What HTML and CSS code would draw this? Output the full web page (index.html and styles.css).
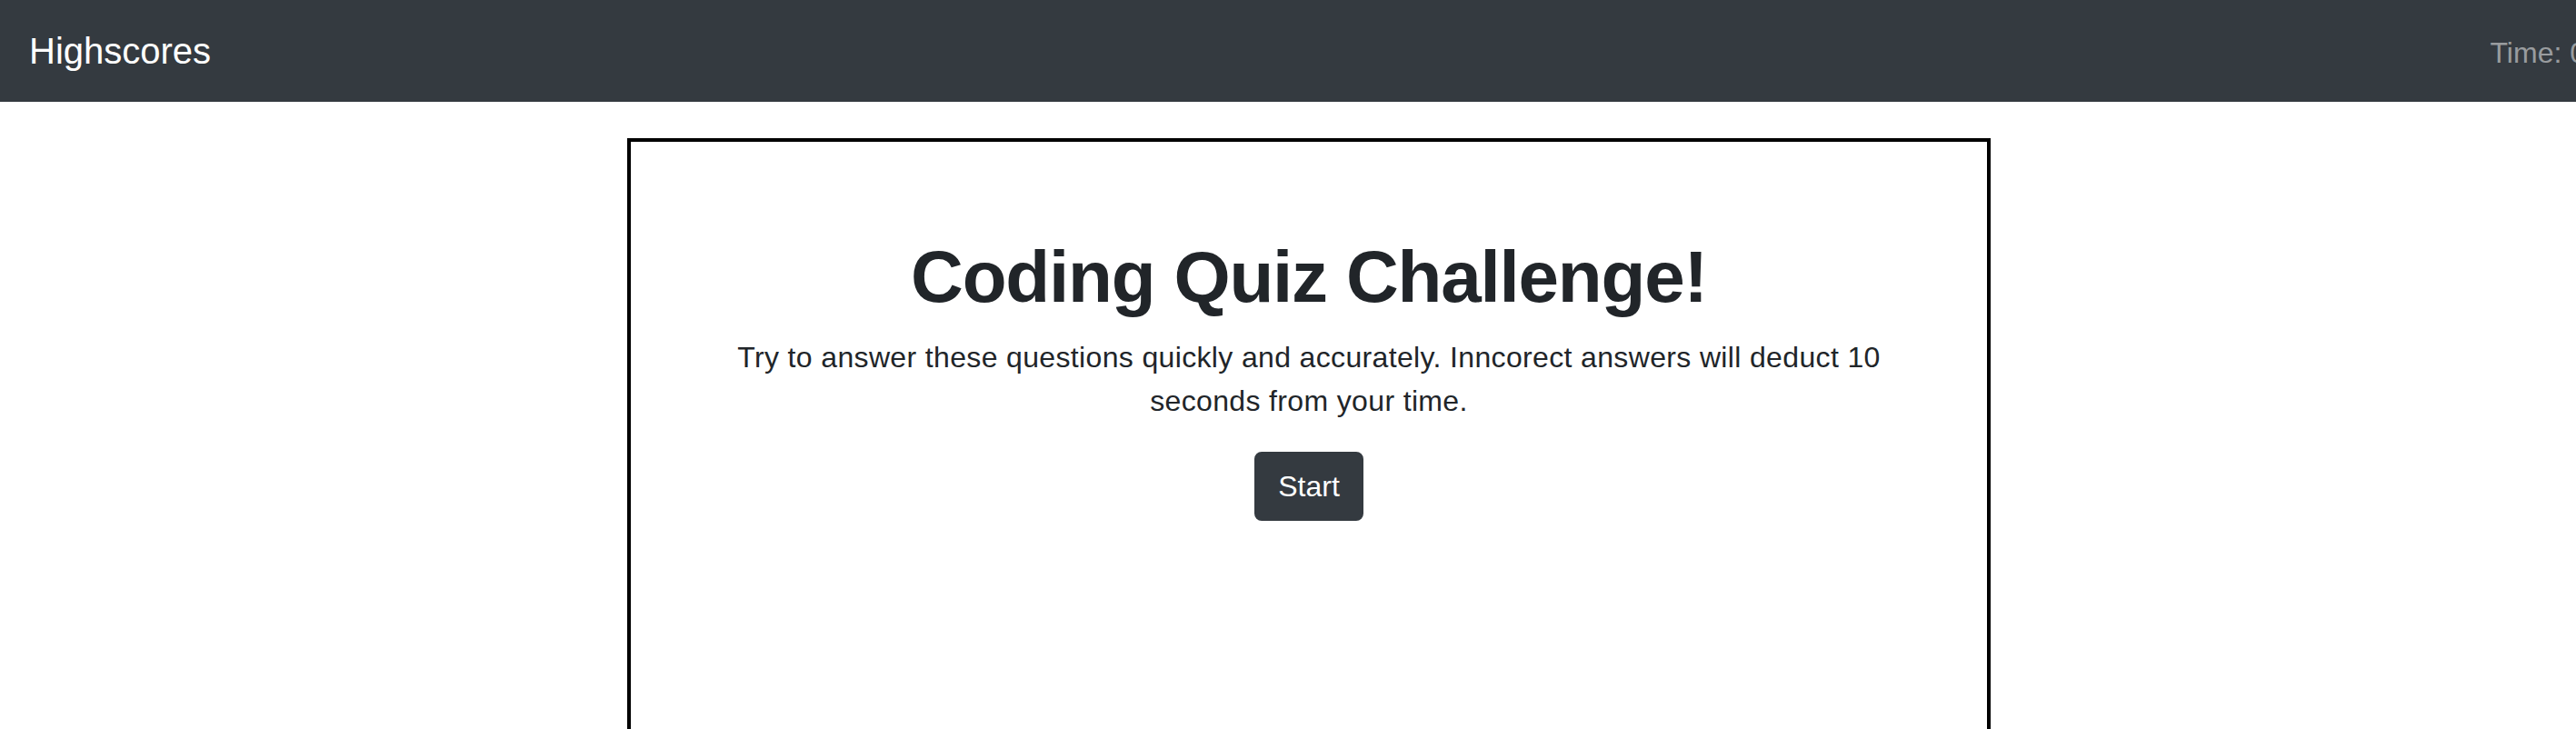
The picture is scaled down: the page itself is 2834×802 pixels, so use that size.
FILE: index.html
```html
<!DOCTYPE html>
<html lang="en">
<head>
<meta charset="utf-8">
<title>Coding Quiz Challenge</title>
<link rel="stylesheet" href="styles.css">
</head>
<body>
  <nav class="navbar">
    <a class="brand" href="#">Highscores</a>
    <span class="timer">Time: 0</span>
  </nav>
  <main class="quiz-box">
    <h1 class="title">Coding Quiz Challenge!</h1>
    <p class="lead">Try to answer these questions quickly and accurately. Inncorect answers will deduct 10 seconds from your time.</p>
    <button class="btn-start" type="button">Start</button>
  </main>
</body>
</html>
```
FILE: styles.css
```css
html {
  overflow: hidden;
}

body {
  margin: 0;
  width: 2880px;
  font-family: "Liberation Sans", Arial, Helvetica, sans-serif;
  color: #212529;
  background: #ffffff;
}

.navbar {
  display: flex;
  align-items: center;
  height: 112px;
  box-sizing: border-box;
  padding: 0 20px 0 32px;
  background: #343a40;
}

.brand {
  font-size: 40px;
  line-height: 60px;
  color: #ffffff;
  text-decoration: none;
}

.timer {
  margin-left: auto;
  padding: 0 15px 0 16px;
  font-size: 32px;
  line-height: 48px;
  margin-top: 3px;
  color: rgba(255, 255, 255, 0.5);
}

.quiz-box {
  box-sizing: border-box;
  width: 1500px;
  min-height: 900px;
  margin: 40px auto 0;
  border: 4px solid #000000;
  padding: 101px 64px 64px;
  display: flex;
  flex-direction: column;
  align-items: center;
  text-align: center;
}

.title {
  margin: 0 0 16px;
  font-size: 80px;
  line-height: 96px;
  font-weight: 700;
  letter-spacing: -1.2px;
}

.lead {
  max-width: 1320px;
  margin: 0 0 32px;
  font-size: 32px;
  line-height: 48px;
  letter-spacing: 0.35px;
}

.btn-start {
  font-family: inherit;
  font-size: 32px;
  line-height: 48px;
  padding: 12px 24px;
  color: #ffffff;
  background: #343a40;
  border: 2px solid #343a40;
  border-radius: 8px;
  cursor: pointer;
}
```
